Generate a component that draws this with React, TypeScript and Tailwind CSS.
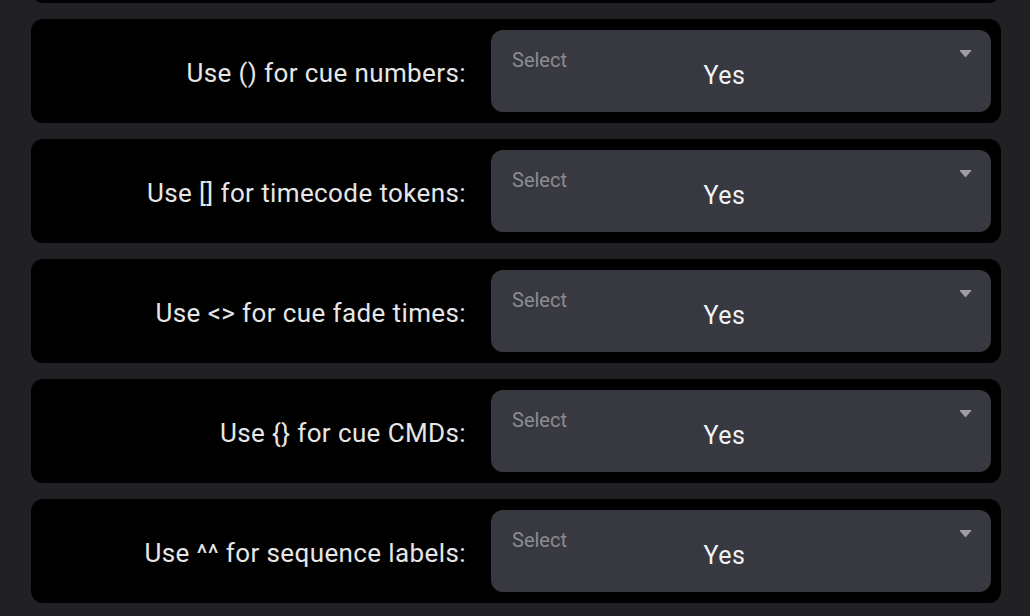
import { useState } from 'react'

const options = [
  { label: 'Use () for cue numbers:', value: 'Yes' },
  { label: 'Use [] for timecode tokens:', value: 'Yes' },
  { label: 'Use <> for cue fade times:', value: 'Yes' },
  { label: 'Use {} for cue CMDs:', value: 'Yes' },
  { label: 'Use ^^ for sequence labels:', value: 'Yes' },
]

function SelectBox({ value }: { value: string }) {
  return (
    <div className="relative w-[500px] h-[82px] shrink-0 rounded-[12px] bg-[#383840] flex items-center justify-center pl-[22px] pr-[55px] pt-[9px]">
      <span className="absolute left-[21px] top-[18px] text-[20px] leading-[24px] text-[#8b8b90]">Select</span>
      <span className="text-[25px] leading-[30px] tracking-[0.02em] text-[#f2f2f2]">{value}</span>
      <svg className="absolute top-[19px] right-[19px]" width="13" height="9" viewBox="0 0 13 9">
        <path d="M1 1.5 L12 1.5 L6.5 8 Z" fill="#9c9ca2" stroke="#9c9ca2" strokeWidth="1" strokeLinejoin="round" />
      </svg>
    </div>
  )
}

function OptionRow({ label, value }: { label: string; value: string }) {
  return (
    <div className="h-[104px] rounded-[12px] bg-black flex items-center gap-[25px] pr-[10px]">
      <div className="flex-1 text-right text-[26px] leading-[36px] tracking-[0.015em] text-[#e6e6e6] mt-[4px] whitespace-nowrap">{label}</div>
      <SelectBox value={value} />
    </div>
  )
}

export default function App() {
  const [rows] = useState(options)

  return (
    <div className="h-[616px] overflow-hidden bg-[#212125] font-['Roboto',sans-serif]">
      <div className="ml-[31px] w-[970px] flex flex-col gap-[16px] -mt-[101px]">
        {/* row above, scrolled mostly out of view */}
        <div className="h-[104px] rounded-[12px] bg-black" />
        {rows.map((r) => (
          <OptionRow key={r.label} label={r.label} value={r.value} />
        ))}
      </div>
    </div>
  )
}
